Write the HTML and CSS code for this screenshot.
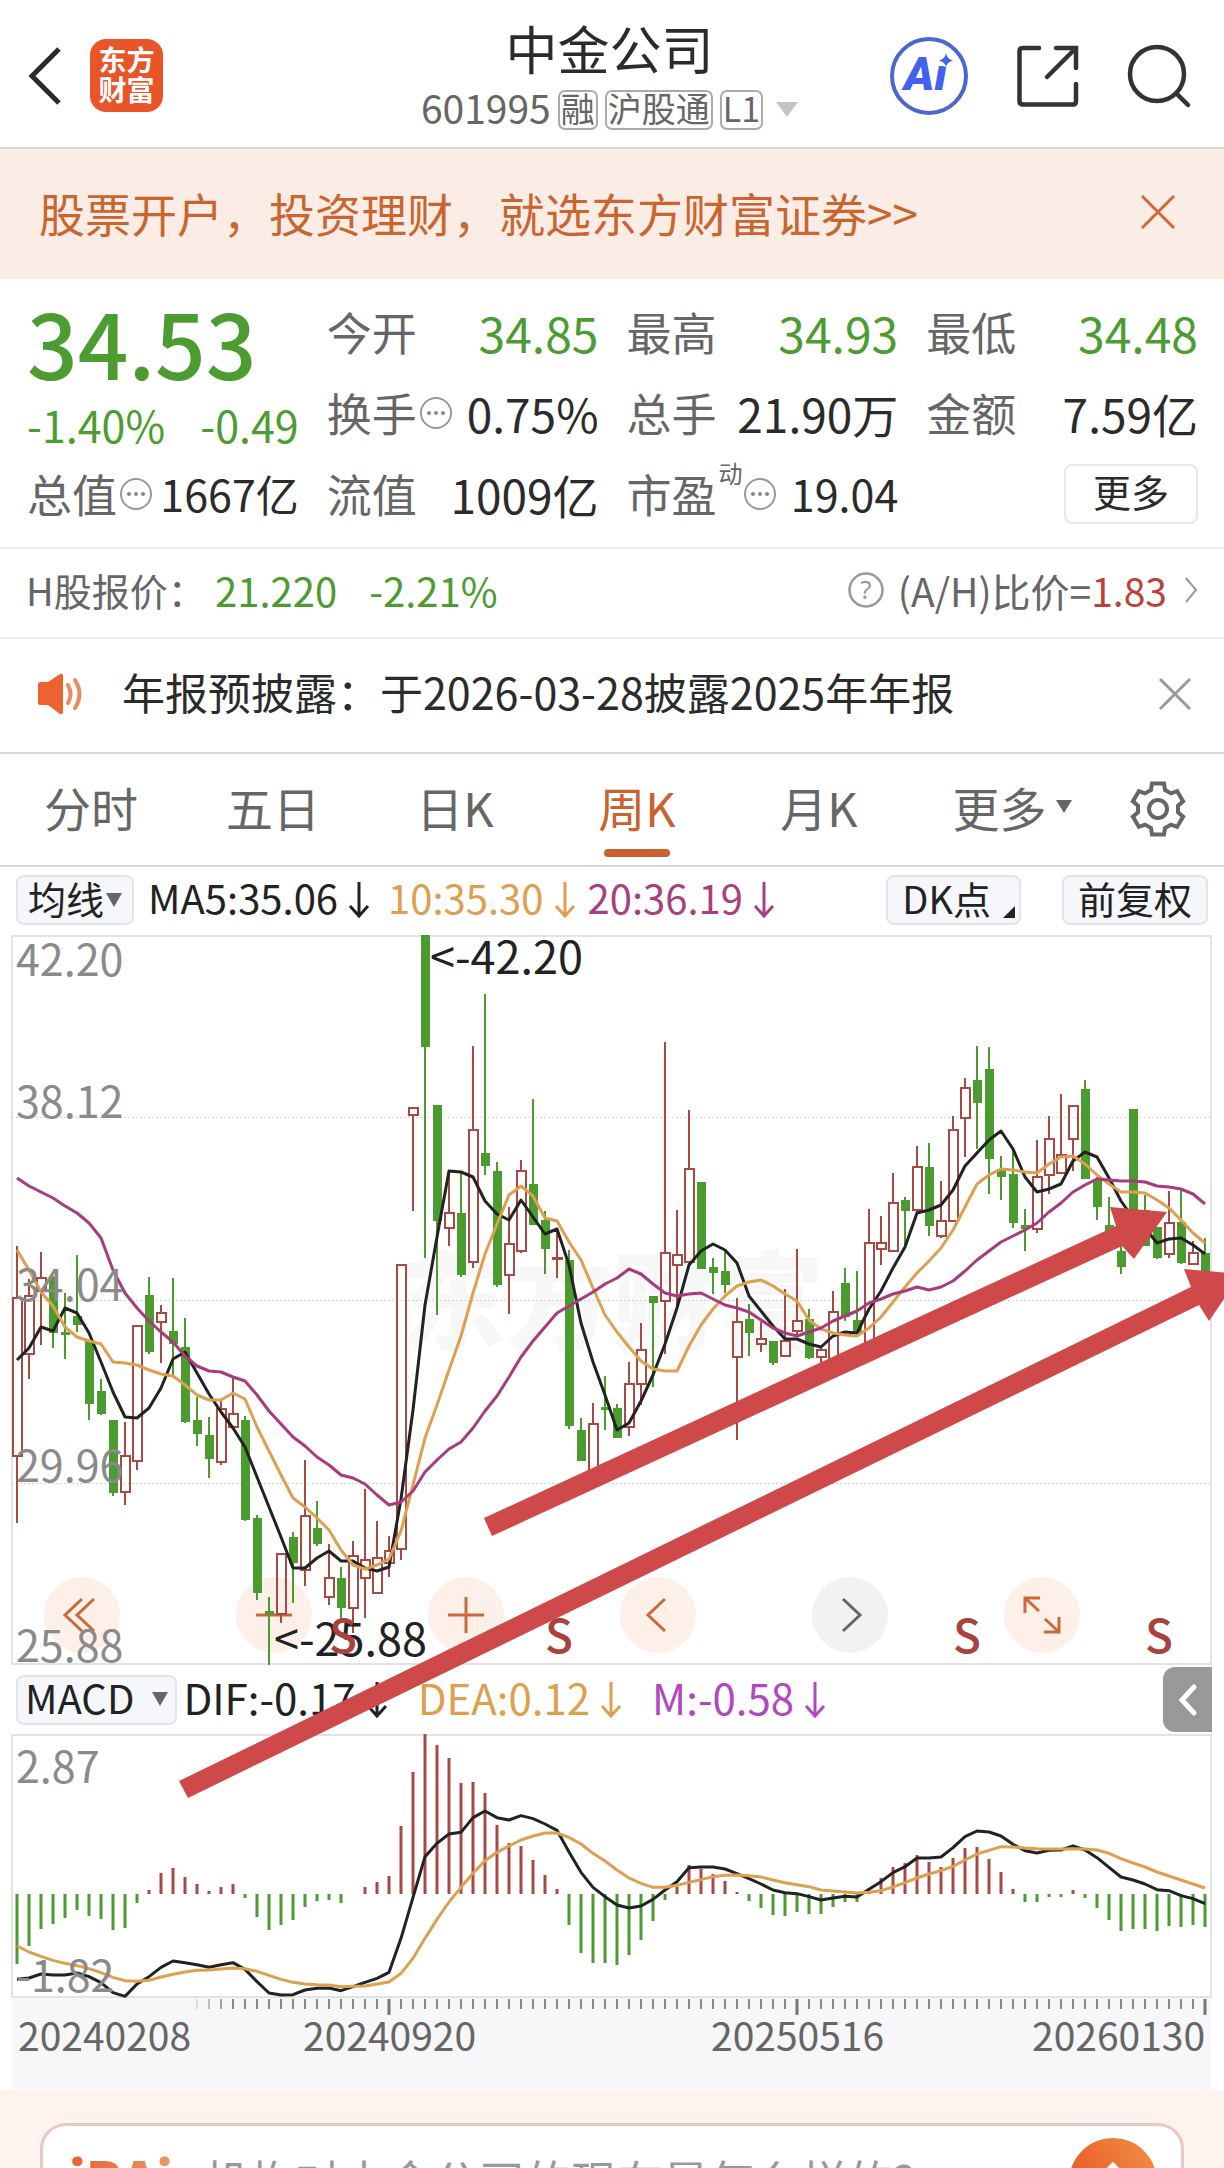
FILE: index.html
```html
<!DOCTYPE html>
<html lang="zh-CN">
<head>
<meta charset="utf-8">
<meta name="viewport" content="width=device-width, initial-scale=1">
<title>中金公司 601995</title>
<link rel="stylesheet" href="styles.css">
</head>
<body>
<header class="topbar">
  <div class="topbar-left">
    <button class="icon-btn" aria-label="返回"><svg width="34" height="60" viewBox="0 0 34 60"><path d="M31 3 L4 30 L31 57" fill="none" stroke="#2b2b2b" stroke-width="5"/></svg></button>
    <a class="logo" href="#"><span>东方</span><span>财富</span></a>
  </div>
  <div class="topbar-title">
    <h1>中金公司</h1>
    <button class="code"><span>601995</span><span class="tag">融</span><span class="tag">沪股通</span><span class="tag">L1</span><svg class="code-caret" width="22" height="16" viewBox="0 0 22 16"><path d="M0 0H22L11 15Z" fill="#c4c4c4"/></svg></button>
  </div>
  <div class="topbar-right">
    <button class="icon-btn" aria-label="AI"><svg width="80" height="80" viewBox="0 0 80 80"><circle cx="40" cy="40" r="37" fill="none" stroke="#4a66cf" stroke-width="4"/><text class="ai-text" x="15" y="54">Ai</text><circle cx="58" cy="23" r="8" fill="#fff"/><path d="M57 17Q58 23 64 24.500Q58 26 57 31Q56 26 50 24.500Q56 23 57 17Z" fill="#4262ee"/></svg></button>
    <button class="icon-btn" aria-label="分享"><svg width="62" height="62" viewBox="0 0 62 62"><g fill="none" stroke="#333" stroke-width="4.500" stroke-linecap="round"><path d="M22 3H6Q2.500 3 2.500 6V56Q2.500 59.500 6 59.500H56Q59 59.500 59 56V39"/><path d="M39 3H59V23"/><path d="M58 4L30 32"/></g></svg></button>
    <button class="icon-btn" aria-label="搜索"><svg width="64" height="64" viewBox="0 0 64 64"><g fill="none" stroke="#333" stroke-width="4.500" stroke-linecap="round"><circle cx="30" cy="30" r="27"/><path d="M50 50L61 61"/></g></svg></button>
  </div>
</header>

<div class="banner">
  <a href="#">股票开户，投资理财，就选东方财富证券&gt;&gt;</a>
  <button class="icon-btn" aria-label="关闭"><svg width="36" height="36" viewBox="0 0 36 36"><path d="M2 2L34 34M34 2L2 34" stroke="#cf6a38" stroke-width="3"/></svg></button>
</div>

<section class="stats">
  <div class="quote">
    <strong>34.53</strong>
    <div class="change"><span>-1.40%</span><span>-0.49</span></div>
  </div>
  <div class="stat big"><span>今开</span><b class="down">34.85</b></div>
  <div class="stat big"><span>最高</span><b class="down">34.93</b></div>
  <div class="stat big"><span>最低</span><b class="down">34.48</b></div>
  <div class="stat"><span>换手</span><svg class="dots" viewBox="0 0 34 34"><use href="#more-dots"/></svg><b>0.75%</b></div>
  <div class="stat"><span>总手</span><b>21.90万</b></div>
  <div class="stat"><span>金额</span><b>7.59亿</b></div>
  <div class="stat small"><span>总值</span><svg class="dots" viewBox="0 0 34 34"><use href="#more-dots"/></svg><b>1667亿</b></div>
  <div class="stat"><span>流值</span><b>1009亿</b></div>
  <div class="stat small pe"><span>市盈<sup>动</sup></span><svg class="dots" viewBox="0 0 34 34"><use href="#more-dots"/></svg><b>19.04</b></div>
  <div class="stat"><button class="more">更多</button></div>
</section>

<a class="hshare" href="#">
  <span class="hshare-label">H股报价：</span><span class="down">21.220</span><span class="down hshare-pct">-2.21%</span>
  <span class="hshare-right"><svg width="38" height="38" viewBox="0 0 38 38"><circle cx="19" cy="19" r="16.500" fill="none" stroke="#999" stroke-width="2.500"/><text class="q-text" x="19" y="28">?</text></svg><span>(A/H)比价=<em>1.83</em></span><svg width="14" height="28" viewBox="0 0 14 28"><path d="M2 2L12 14L2 26" fill="none" stroke="#999" stroke-width="2"/></svg></span>
</a>

<div class="notice">
  <svg width="52" height="42" viewBox="0 0 52 42"><path d="M2 11Q2 9 4 9H12L24 1Q27 0 27 3V39Q27 42 24 41L12 32H4Q2 32 2 30Z" fill="#ec6231"/><path d="M32 12Q37 21 32 30M39 7Q48 21 39 35" fill="none" stroke="#ee8a5e" stroke-width="4" stroke-linecap="round"/></svg>
  <span>年报预披露：于2026-03-28披露2025年年报</span>
  <button class="icon-btn" aria-label="关闭"><svg width="34" height="34" viewBox="0 0 34 34"><path d="M2 2L32 32M32 2L2 32" stroke="#999" stroke-width="3"/></svg></button>
</div>

<nav class="tabs">
  <button>分时</button><button>五日</button><button>日K</button><button class="active">周K</button><button>月K</button>
  <button class="tab-more">更多<svg width="16" height="13" viewBox="0 0 16 13"><path d="M0 0H16L8 13Z" fill="#666"/></svg></button>
  <button class="tab-settings" aria-label="设置"><svg width="58" height="58" viewBox="-29 -29 58 58"><g fill="none" stroke="#666" stroke-width="4"><path d="M-7-19L-6-25.500H6L7-19L13-15.600L19.100-17.900L25.100-7.600L20-3.400V3.400L25.100 7.600L19.100 17.900L13 15.600L7 19L6 25.500H-6L-7 19L-13 15.600L-19.100 17.900L-25.100 7.600L-20 3.400V-3.400L-25.100-7.600L-19.100-17.900L-13-15.600Z"/><circle r="9"/></g></svg></button>
</nav>

<div class="indicators ma">
  <button class="chip">均线<svg width="16" height="14" viewBox="0 0 16 14"><path d="M0 0H16L8 14Z" fill="#666"/></svg></button>
  <span class="ind black">MA5:35.06<svg class="arrow" viewBox="0 0 22 36"><use href="#arrow-down"/></svg></span>
  <span class="ind orange">10:35.30<svg class="arrow" viewBox="0 0 22 36"><use href="#arrow-down"/></svg></span>
  <span class="ind purple">20:36.19<svg class="arrow" viewBox="0 0 22 36"><use href="#arrow-down"/></svg></span>
  <button class="chip chip-dk">DK点<svg width="12" height="12" viewBox="0 0 12 12"><path d="M12 0V12H0Z" fill="#222"/></svg></button>
  <button class="chip">前复权</button>
</div>

<main class="charts">
  <div class="kchart">
    <div class="controls">
      <button aria-label="最早"><svg viewBox="0 0 76 76"><path d="M38 22L21 38L38 54M50 22L33 38L50 54"/></svg></button>
      <button aria-label="缩小"><svg viewBox="0 0 76 76"><path d="M20 38H56"/></svg></button>
      <button aria-label="放大"><svg viewBox="0 0 76 76"><path d="M20 38H56M38 20V56"/></svg></button>
      <button aria-label="向左"><svg viewBox="0 0 76 76"><path d="M45 22L28 38L45 54"/></svg></button>
      <button class="muted" aria-label="向右"><svg viewBox="0 0 76 76"><path d="M31 22L48 38L31 54"/></svg></button>
      <button aria-label="全屏"><svg viewBox="0 0 76 76"><path d="M36 21H21V36M21 21L35 34M55 40V55H40M55 55L41 42"/></svg></button>
    </div>
    <svg id="kline" class="plot" viewBox="0 0 1224 730" role="img" aria-label="周K线"></svg>
  </div>
  <div class="indicators macd">
    <button class="chip chip-macd">MACD<svg width="16" height="14" viewBox="0 0 16 14"><path d="M0 0H16L8 14Z" fill="#666"/></svg></button>
    <span class="ind black">DIF:-0.17<svg class="arrow" viewBox="0 0 22 36"><use href="#arrow-down"/></svg></span>
    <span class="ind orange">DEA:0.12<svg class="arrow" viewBox="0 0 22 36"><use href="#arrow-down"/></svg></span>
    <span class="ind violet">M:-0.58<svg class="arrow" viewBox="0 0 22 36"><use href="#arrow-down"/></svg></span>
    <button class="drawer" aria-label="展开"><svg width="20" height="32" viewBox="0 0 20 32"><path d="M16 3L4 16L16 29" fill="none" stroke="#fff" stroke-width="5" stroke-linecap="round"/></svg></button>
  </div>
  <svg id="macd" class="plot" viewBox="0 0 1224 356" role="img" aria-label="MACD"></svg>
  <svg class="trend" viewBox="0 0 1224 1155" aria-hidden="true">
    <path d="M484 583L1116 291L1110 272L1167 277L1134 324L1122 311L492 601Z"/>
    <path d="M179 846L1191 352L1184 334L1241 339L1209 386L1199 370L188 863Z"/>
  </svg>
</main>

<footer class="ask">
  <div class="ask-box">
    <span class="ask-logo">iRAi</span>
    <span class="ask-text">机构对中金公司的现在是怎么样的?</span>
    <button class="ask-send" aria-label="发送"><svg width="40" height="44" viewBox="0 0 40 44"><path d="M20 4V42M4 20L20 4L36 20" fill="none" stroke="#fff" stroke-width="6" stroke-linecap="round"/></svg></button>
  </div>
</footer>

<svg class="defs" width="0" height="0">
  <symbol id="more-dots" viewBox="0 0 34 34"><circle cx="17" cy="17" r="15" fill="none" stroke="#999" stroke-width="2"/><g fill="#888"><circle cx="10" cy="17" r="2"/><circle cx="17" cy="17" r="2"/><circle cx="24" cy="17" r="2"/></g></symbol>
  <symbol id="arrow-down" viewBox="0 0 22 36"><path d="M11 0V33M2 24L11 34L20 24" fill="none" stroke="currentColor" stroke-width="3"/></symbol>
</svg>
<script src="chart.js"></script>
</body>
</html>
```

FILE: styles.css
```css
* { box-sizing: border-box; }
body {
  margin: 0;
  background: #fff;
  color: #2b2b2b;
  font-family: "Noto Sans CJK SC", "Noto Sans", sans-serif;
  line-height: 1;
}
button {
  margin: 0;
  padding: 0;
  border: 0;
  background: none;
  color: inherit;
  font: inherit;
}
a { color: inherit; text-decoration: none; }
svg { display: block; flex: none; }
.defs { position: absolute; }
.down { color: #4c9c32; }

.topbar {
  display: grid;
  grid-template-columns: 1fr auto 1fr;
  align-items: center;
  height: 149px;
  border-bottom: 2px solid #d9d9d9;
  padding: 4px 33px 0 28px;
}
.topbar-left, .topbar-right { display: flex; align-items: center; }
.topbar-left { gap: 28px; }
.topbar-right { gap: 48px; justify-content: flex-end; }
.logo {
  display: flex;
  flex-direction: column;
  align-items: center;
  justify-content: center;
  gap: 2px;
  width: 73px;
  height: 73px;
  border-radius: 16px;
  background: #e9552b;
  color: #fff;
  font-size: 28px;
  font-weight: 700;
  padding-bottom: 4px;
}
.topbar-title { display: flex; flex-direction: column; align-items: center; gap: 16px; }
.topbar-title h1 { margin: 0; font-size: 52px; font-weight: 400; }
.code { display: flex; align-items: center; gap: 7px; color: #666; font-size: 39px; height: 40px; }
.code > span:first-child { padding-bottom: 4px; }
.tag {
  height: 40px;
  border: 2px solid #aaa;
  border-radius: 7px;
  padding: 0 1px;
  font-size: 34px;
  line-height: 32px;
}
.code-caret { margin-left: 6px; }
.ai-text { font: italic 900 46px Roboto, sans-serif; fill: #4262ee; }

.banner {
  display: flex;
  align-items: center;
  justify-content: space-between;
  height: 130px;
  padding: 0 48px 4px 39px;
  background: #fbede5;
  color: #c9652f;
  font-size: 46px;
}

.stats {
  display: grid;
  grid-template-columns: repeat(4, 1fr);
  grid-auto-rows: 81px;
  column-gap: 28px;
  padding: 12px 26px 13px 27px;
  border-bottom: 2px solid #eee;
}
.quote { grid-row: span 2; color: #4c9c32; display: flex; flex-direction: column; }
.quote strong { font-size: 89px; font-weight: 500; padding-top: 6px; }
.change { display: flex; justify-content: space-between; font-size: 43px; padding-top: 17px; }
.stat { display: flex; align-items: center; font-size: 46px; }
.stat > span { color: #666; font-size: 45px; white-space: nowrap; position: relative; }
.stat b { margin-left: auto; font-weight: 400; }
.stat.big b { font-size: 48px; }
.stat.small b { font-size: 43px; }
.stat sup { position: absolute; left: 92px; top: -10px; font-size: 24px; line-height: 24px; }
.dots { width: 34px; height: 34px; margin-left: 2px; }
.pe .dots { margin-left: 26px; }
.more {
  width: 134px;
  height: 60px;
  margin-left: auto;
  border: 2px solid #e8e8e8;
  border-radius: 8px;
  font-size: 38px;
  padding-bottom: 6px;
}

.hshare {
  display: flex;
  align-items: center;
  height: 90px;
  padding: 0 26px 6px 26px;
  border-bottom: 2px solid #eee;
  font-size: 40px;
  color: #666;
}
.hshare-label { font-size: 38px; width: 189px; white-space: nowrap; }
.hshare-pct { margin-left: 32px; }
.hshare-right { display: flex; align-items: center; gap: 13px; margin-left: auto; font-size: 39px; }
.hshare-right > svg:last-child { margin-left: 4px; }
.hshare em { color: #b8433a; font-style: normal; }
.q-text { font: 26px "Noto Sans", sans-serif; fill: #999; text-anchor: middle; }

.notice {
  display: flex;
  align-items: center;
  height: 115px;
  padding: 0 32px 4px 36px;
  border-bottom: 2px solid #d9d9d9;
  font-size: 43px;
}
.notice span { margin-left: 34px; padding-bottom: 4px; }
.notice .icon-btn { margin-left: auto; }

.tabs {
  display: grid;
  grid-template-columns: repeat(6, 182fr) 132fr;
  height: 113px;
  border-bottom: 2px solid #d9d9d9;
  color: #666;
  font-size: 47px;
}
.tabs button { display: flex; align-items: center; justify-content: center; padding-bottom: 7px; }
.tabs .tab-settings { padding-bottom: 2px; }
.tabs .active { position: relative; color: #c9622f; }
.tabs .active::after {
  content: "";
  position: absolute;
  bottom: 8px;
  width: 66px;
  height: 8px;
  border-radius: 4px;
  background: #c9622f;
}
.tabs .tab-more { gap: 9px; padding-left: 22px; }

.indicators { display: flex; align-items: center; height: 68px; }
.ma { padding: 0 16px 2px; font-size: 40px; }
.macd { height: 69px; padding: 0 12px 0 16px; font-size: 42px; }
.ind { display: flex; align-items: center; gap: 10px; padding-bottom: 6px; white-space: nowrap; }
.arrow { width: 22px; height: 36px; margin-top: 6px; }
.black { color: #222; margin-left: 14px; }
.orange { color: #dda050; margin-left: 18px; }
.purple { color: #a83f80; margin-left: 12px; }
.violet { color: #b248bf; margin-left: 30px; }
.macd .black { margin-left: 6px; }
.macd .orange { margin-left: 30px; }
.chip {
  display: flex;
  align-items: center;
  height: 50px;
  gap: 2px;
  padding: 0 14px 5px;
  border: 2px solid #e2e5ea;
  border-radius: 8px;
  background: #f6f7fa;
  color: #222;
  font-size: 38px;
  white-space: nowrap;
}
.chip:first-child { padding: 0 10px 5px; }
.chip:first-child svg { margin-top: 4px; }
.chip:last-child { margin-left: 41px; }
.chip-dk { margin-left: auto; padding: 0 4px 5px 14px; gap: 12px; }
.chip-dk svg { align-self: flex-end; }
.chip.chip-macd { font-size: 40px; padding: 0 7px 5px; gap: 18px; }
.drawer {
  display: flex;
  align-items: center;
  justify-content: center;
  width: 49px;
  height: 65px;
  margin-left: auto;
  border-radius: 12px 0 0 12px;
  background: #999;
}

.charts { position: relative; overflow: hidden; }
.kchart { position: relative; }
.plot { position: relative; width: 100%; height: auto; }
.kchart .plot { pointer-events: none; }
.controls {
  position: absolute;
  left: 3.6%;
  right: 11.8%;
  bottom: 12px;
  display: flex;
  justify-content: space-between;
}
.controls button { width: 76px; height: 76px; border-radius: 50%; background: #fcf0e9; }
.controls .muted { background: #f2f2f2; }
.controls path { fill: none; stroke: #c96a3a; stroke-width: 3; }
.controls .muted path { stroke: #666; }
.trend { position: absolute; left: 0; top: 0; width: 100%; height: auto; fill: #cf484a; pointer-events: none; }

.frame { fill: none; stroke: #e3e3e3; stroke-width: 2; }
.grid { stroke: #d4d4d4; stroke-width: 1; stroke-dasharray: 2 2; }
.watermark { font-size: 106px; font-weight: 900; fill: #f7f7f7; }
.up-bar { fill: none; stroke: #a84a44; stroke-width: 2; }
.down-bar { fill: #4b9b30; stroke: #4b9b30; stroke-width: 2; }
.hist { stroke-width: 3; }
.line { fill: none; stroke-width: 3; stroke-linejoin: round; }
.line-black { stroke: #222; }
.line-orange { stroke: #dda050; }
.line-purple { stroke: #a83a7e; }
.scale { font-size: 43px; fill: #8a8a8a; }
.mark { font-size: 45px; fill: #222; }
.sell { font-size: 46px; fill: #a9423c; font-weight: 500; text-anchor: middle; }
.date { font-size: 39px; fill: #666; }
.tick { stroke: #888; stroke-width: 2; }
.tick-major { stroke: #777; stroke-width: 3; }

.ask { height: 78px; overflow: hidden; padding: 33px 40px 0; background: #fef3ee; }
.ask-box {
  display: flex;
  height: 120px;
  padding: 12px 24px 0 26px;
  border: 3px solid #e8c8c0;
  border-radius: 26px;
  background: #fff;
}
.ask-logo {
  width: 134px;
  padding-top: 14px;
  background: linear-gradient(90deg, #e8612f, #eda77e);
  background-clip: text;
  -webkit-background-clip: text;
  color: transparent;
  font-size: 52px;
  font-weight: 900;
}
.ask-text { color: #999; font-size: 46px; padding-top: 18px; white-space: nowrap; }
.ask-send {
  display: flex;
  justify-content: center;
  width: 88px;
  height: 88px;
  margin-left: auto;
  padding-top: 24px;
  border-radius: 50%;
  background: linear-gradient(60deg, #e8501f, #f09048);
}
```

FILE: chart.js
```js
// 100 weekly bars, 12 units apart. Heights of the price plot are stored on
// a scale where 31 is 42.20 (top) and 1537 is 25.88 (bottom).
// Bar: [1 = up / 0 = down, high, body top, body bottom, low]
const bars = [
[1,672,780,1106,1244],[1,740,775,895,948],[1,685,738,766,877],[0,735,738,850,883],[0,770,853,855,906],
[0,691,820,834,850],[0,870,870,996,1032],[0,947,974,1017,1021],[0,1034,1034,1180,1188],[1,1035,1106,1180,1206],
[1,838,838,1116,1134],[0,737,776,890,896],[1,795,811,830,914],[0,738,850,873,940],[0,821,882,1034,1038],
[0,985,1034,1058,1086],[0,1026,1064,1110,1151],[1,990,1008,1118,1125],[1,942,1020,1045,1050],[0,1023,1034,1236,1240],
[0,1228,1236,1387,1403],[0,1397,1427,1429,1539],[1,1305,1308,1431,1450],[0,1262,1274,1325,1410],[1,1114,1230,1340,1373],
[0,1198,1256,1286,1291],[1,1287,1357,1396,1413],[0,1334,1360,1418,1450],[1,1282,1313,1419,1470],[1,1174,1321,1358,1440],
[1,1240,1316,1388,1388],[1,1270,1301,1327,1355],[1,711,712,1298,1320],[1,386,387,402,600],[0,31,31,260,698],
[0,381,383,618,815],[1,520,605,636,672],[0,517,606,730,737],[1,260,433,706,718],[0,153,482,505,527],
[0,500,520,751,758],[1,592,668,732,813],[1,495,518,682,688],[0,370,546,628,628],[0,600,620,677,731],
[1,637,697,699,738],[0,680,704,1042,1050],[0,1027,1054,1115,1115],[1,997,1039,1150,1150],[0,940,1006,1008,1052],
[0,998,1009,1066,1069],[1,912,957,1045,1065],[1,831,887,957,1000],[0,775,778,788,963],[1,251,687,787,896],
[1,598,691,712,800],[1,392,513,706,712],[0,541,543,717,719],[0,698,717,727,772],[0,680,727,752,770],
[1,780,829,902,1073],[0,793,825,851,900],[1,830,865,875,891],[0,870,871,911,918],[1,762,868,900,900],
[1,679,827,847,860],[0,802,826,902,906],[1,880,888,902,920],[1,765,808,920,920],[0,719,752,816,828],
[0,724,827,852,852],[1,597,666,900,900],[1,610,667,678,712],[1,522,583,683,683],[0,571,579,599,670],
[1,466,510,598,606],[0,461,512,629,652],[1,538,620,651,656],[1,404,433,620,620],[1,326,347,409,489],
[0,260,332,376,472],[0,262,309,492,565],[0,487,515,528,578],[0,470,526,623,635],[0,597,632,636,683],
[1,453,530,637,645],[1,405,451,527,565],[1,358,485,522,522],[1,382,383,451,518],[0,331,350,532,532],
[0,530,537,590,618],[0,572,632,640,640],[0,670,685,714,730],[0,392,392,610,610],[0,568,600,670,670],
[0,635,636,695,700],[1,560,625,690,697],[0,555,625,706,710],[1,663,687,710,710],[0,656,689,725,730]
];
const ma5 = [908,883,840,848,800,810,853,912,973,1025,1027,1006,965,905,891,935,978,1015,1048,1088,1150,1212,1272,1336,1336,1316,1302,1323,1323,1337,1344,1334,1195,1010,795,655,517,520,530,579,606,618,578,613,648,638,712,832,912,980,1053,1037,992,938,875,800,712,682,668,680,708,776,806,838,864,865,875,880,858,849,853,802,765,718,674,605,598,588,558,508,480,454,436,472,530,562,555,545,498,478,490,533,580,615,635,666,659,657,671,690];
const ma10 = [680,723,768,797,840,860,868,875,911,913,918,929,937,941,960,980,991,991,975,988,1045,1096,1145,1192,1212,1234,1258,1300,1330,1338,1330,1318,1260,1165,1068,1000,928,858,770,689,628,568,549,570,614,622,665,702,760,815,849,880,910,927,930,930,878,835,802,775,755,746,742,755,772,787,826,844,852,857,858,842,820,788,758,728,703,677,640,592,545,526,513,516,520,522,503,490,487,504,526,545,562,562,563,578,595,618,645,667];
const ma20 = [533,549,561,574,590,605,626,657,722,769,800,827,849,870,899,920,930,933,943,951,980,1012,1040,1066,1085,1107,1125,1144,1152,1163,1186,1206,1200,1178,1138,1115,1092,1077,1048,1014,982,943,902,868,840,810,796,781,768,752,738,721,730,750,769,775,771,770,782,795,801,809,825,842,852,858,850,841,828,817,807,791,781,771,766,758,763,758,744,724,701,682,665,651,640,626,602,583,562,547,534,536,538,539,541,549,550,554,566,585];
// MACD values: three steps per unit, zero line at 702, frame top at 222.
const hist = [912,858,807,792,774,750,768,777,810,804,729,690,639,624,651,672,693,681,672,714,771,810,795,780,741,723,720,729,702,681,666,648,498,336,222,255,294,369,366,399,495,549,558,600,645,687,795,879,909,909,915,885,840,783,720,681,615,627,642,663,696,723,744,765,768,756,762,762,741,726,726,684,654,621,609,585,606,621,594,564,561,597,636,687,726,726,711,711,690,714,744,780,813,807,807,813,798,801,795,801];
const dif = [958,954,942,945,945,939,950,968,998,1009,972,950,922,903,908,914,922,914,908,928,965,999,1005,1004,990,985,984,992,980,967,955,937,835,712,590,550,522,517,473,453,473,480,467,476,492,511,576,637,682,710,735,744,738,718,690,665,623,621,621,627,641,656,672,690,698,701,710,720,714,709,711,688,665,638,620,594,594,591,563,530,513,516,528,553,572,579,571,570,558,570,593,622,651,660,672,689,692,707,716,731];
const dea = [858,876,889,901,910,917,926,938,952,962,964,961,951,943,936,931,930,927,924,926,934,946,958,967,972,974,975,980,979,978,972,966,940,895,835,778,726,682,640,602,577,558,540,528,519,519,532,552,580,603,630,654,670,682,682,676,667,659,650,646,645,647,651,660,668,674,680,690,693,696,699,697,692,681,668,654,642,632,619,600,582,571,560,561,564,566,567,567,566,567,570,580,596,609,621,636,648,660,672,684];

const NS = "http://www.w3.org/2000/svg";
const kline = document.getElementById("kline");
const macd = document.getElementById("macd");
const barX = i => 17 + 12 * i;
const priceY = v => Math.round((v - 31) * 730 / 1506);
const macdY = v => (v - 222) / 3;

function draw(svg, tag, attrs, text) {
  const node = document.createElementNS(NS, tag);
  for (const key in attrs) node.setAttribute(key, attrs[key]);
  if (text) node.textContent = text;
  svg.appendChild(node);
}
function curve(svg, values, y, cls) {
  draw(svg, "polyline", { class: "line " + cls, points: values.map((v, i) => barX(i) + "," + y(v)).join(" ") });
}

draw(kline, "text", { class: "watermark", x: 400, y: 406 }, "东方财富");
draw(kline, "rect", { class: "frame", x: 12, y: 1, width: 1199, height: 728 });
[182, 365, 548].forEach(y => draw(kline, "path", { class: "grid", d: `M12 ${y}.5H1211` }));
bars.forEach(([up, high, top, bottom, low], i) => {
  const x = barX(i), a = priceY(high), b = priceY(top), c = Math.max(priceY(bottom), b + 1), d = priceY(low);
  if (up) draw(kline, "path", { class: "up-bar", d: `M${x} ${a}V${b}M${x} ${c}V${d}M${x - 4} ${b}H${x + 5}V${c}H${x - 4}Z` });
  else draw(kline, "path", { class: "down-bar", d: `M${x} ${a}V${d}M${x - 3} ${b}H${x + 4}V${c}H${x - 3}Z` });
});
curve(kline, ma5, priceY, "line-black");
curve(kline, ma10, priceY, "line-orange");
curve(kline, ma20, priceY, "line-purple");
[["42.20", 41], ["38.12", 183], ["34.04", 366], ["29.96", 547], ["25.88", 727]]
  .forEach(([t, y]) => draw(kline, "text", { class: "scale", x: 16, y }, t));
draw(kline, "text", { class: "mark", x: 430, y: 39 }, "<-42.20");
draw(kline, "text", { class: "mark", x: 274, y: 721 }, "<-25.88");
[343, 559, 967, 1159].forEach(x => draw(kline, "text", { class: "sell", x, y: 718 }, "S"));

draw(macd, "rect", { x: 12, y: 264, width: 1199, height: 92, fill: "#f7f7fa" });
draw(macd, "rect", { class: "frame", x: 12, y: 1, width: 1199, height: 262 });
hist.forEach((v, i) => {
  if (v !== 702) draw(macd, "path", { class: (v < 702 ? "up-bar" : "down-bar") + " hist", d: `M${barX(i)} 160V${macdY(v)}` });
});
curve(macd, dif, macdY, "line-black");
curve(macd, dea, macdY, "line-orange");
draw(macd, "text", { class: "scale", x: 16, y: 49 }, "2.87");
draw(macd, "text", { class: "scale", x: 16, y: 258 }, "-1.82");
for (let i = 15; i < 100; i++) {
  const major = i === 31 || i === 65 || i === 99;
  draw(macd, "path", { class: major ? "tick-major" : "tick", opacity: Math.min(1, (i - 14) / 4), d: `M${barX(i)} 265V${major ? 281 : 275}` });
}
[["20240208", 18], ["20240920", 303], ["20250516", 711], ["20260130", 1032]]
  .forEach(([t, x]) => draw(macd, "text", { class: "date", x, y: 317 }, t));
```
